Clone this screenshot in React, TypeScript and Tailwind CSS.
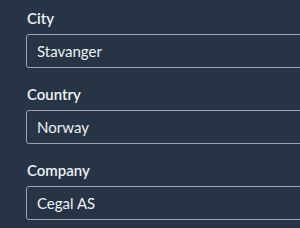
import React from "react";

const fields = [
  { label: "City", value: "Stavanger" },
  { label: "Country", value: "Norway" },
  { label: "Company", value: "Cegal AS" },
];

export default function App() {
  return (
    <div
      className="w-[300px] h-[228px] overflow-hidden bg-[#263445] pt-[8px] pl-[26px]"
      style={{ fontFamily: "Lato, 'Noto Sans', sans-serif" }}
    >
      {fields.map((f) => (
        <div key={f.label} className="mb-[16px] flex flex-col">
          <label className="h-[20px] leading-[20px] text-[15px] font-semibold text-[#eef1f4] pl-[1px]">
            {f.label}
          </label>
          <div className="mt-[6px] w-[300px] h-[34px] shrink-0 rounded-[3px] border border-[#9aa3ab] flex items-center pl-[10px] text-[15px] text-[#eef1f4]">
            {f.value}
          </div>
        </div>
      ))}
    </div>
  );
}
